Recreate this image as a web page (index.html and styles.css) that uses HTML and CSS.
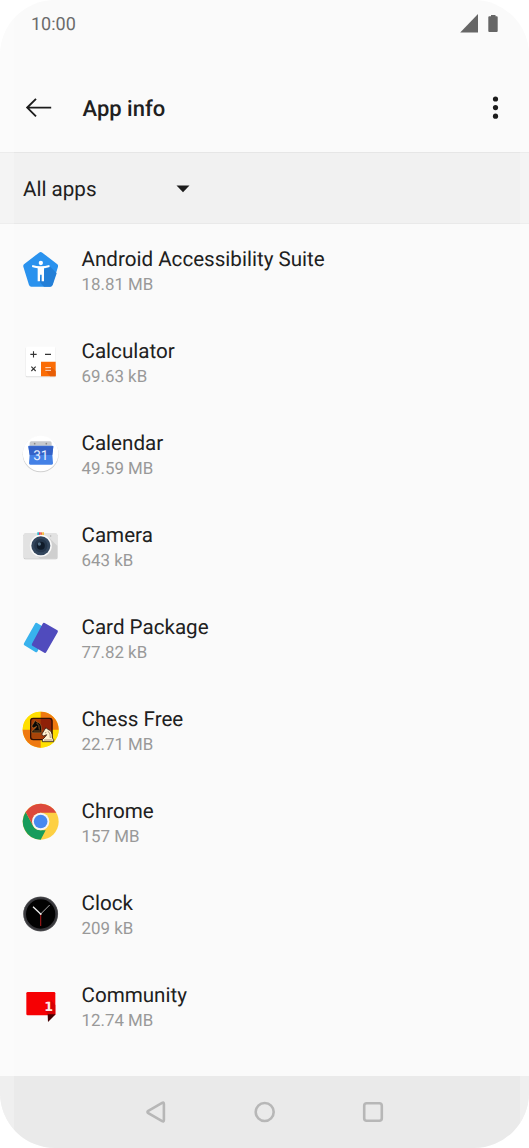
FILE: index.html
```html
<!DOCTYPE html>
<html lang="en">
<head>
<meta charset="utf-8">
<title>App info</title>
<link rel="stylesheet" href="styles.css">
</head>
<body>
<div class="phone">
  <div class="statusbar">
    <span class="time">10:00</span>
    <svg class="status-icons" width="40" height="20" viewBox="0 0 40 20"><path d="M1.200 19.500 19 1v18.500z"/><path d="M32 2h4.500v1.200h1.200q1 0 1 1V18q0 1-1 1h-7.400q-1 0-1-1V4.200q0-1 1-1H32z"/></svg>
  </div>
  <header class="appbar">
    <svg class="back" width="28" height="24" viewBox="0 0 28 24"><path d="M26.200 11.600H2.200M11 2.800 2.200 11.600l8.800 8.800"/></svg>
    <h1>App info</h1>
    <svg class="more" width="8" height="24" viewBox="0 0 8 24"><circle cx="4.500" cy="3" r="2.600"/><circle cx="4.500" cy="11.600" r="2.600"/><circle cx="4.500" cy="20.200" r="2.600"/></svg>
  </header>
  <div class="filter"><span>All apps</span><svg width="14" height="8" viewBox="0 0 14 8"><path d="M.5.5h13L7 7.200z"/></svg></div>
  <ul class="apps">
    <li>
      <svg class="icon" viewBox="0 0 180 180"><path d="M97 38 142 73q3 3 2 7l-17 55q-2 5-7 5H64q-5 0-7-5L40 80q-1-4 2-7L87 38q5-4 10 0z" fill="#2a92ee"/><path d="m118 77 22 23-12 35q-2 5-8 5h-18l-16-18 16-32z" fill="#237fd7"/><circle cx="92.500" cy="69" r="6.500" fill="#fff"/><path d="M67 75q25 8 51 0l1 6q-9 3-17 4v39h-7v-20h-5v20h-7V85q-9-1-17-4z" fill="#fff"/></svg>
      <div><h2>Android Accessibility Suite</h2><p>18.81 MB</p></div>
    </li>
    <li>
      <svg class="icon" viewBox="0 0 180 180"><rect x="47" y="46" width="91" height="90" rx="4" fill="#dedede"/><rect x="48" y="44" width="89" height="89" rx="3" fill="#fff"/><path d="M93 89h44v41q0 3-3 3H93z" fill="#fb6c05"/><path d="m123 104 14 14v15h-17l-14-18z" fill="#e75d05"/><path d="M61 67h19M70.500 57.500v19M105 67h18M64 104l13 13M77 104l-13 13" stroke="#333" stroke-width="3.300" fill="none"/><path d="M106 107h17M106 115h17" stroke="#ffe3ce" stroke-width="3"/></svg>
      <div><h2>Calculator</h2><p>69.63 kB</p></div>
    </li>
    <li>
      <svg class="icon" viewBox="0 0 180 180"><circle cx="92" cy="91" r="54" fill="#d0d0d0"/><circle cx="92" cy="88.500" r="53.500" fill="#fff"/><path d="M64 52h56q5 0 5 5v10H59V57q0-5 5-5z" fill="#c7c9cd"/><circle cx="74" cy="59" r="2.500" fill="#888"/><circle cx="109" cy="59" r="2.500" fill="#888"/><path d="M57 65h71q2 0 2 3l-3 24 2 26q0 4-4 4H61q-4 0-4-4l2-26-4-24q0-3 2-3z" fill="#4481e6"/><path d="M55 67h75l-3 26H59z" fill="#3462c8"/><text x="92.500" y="108" text-anchor="middle" class="date">31</text></svg>
      <div><h2>Calendar</h2><p>49.59 MB</p></div>
    </li>
    <li>
      <svg class="icon" viewBox="0 0 180 180"><rect x="41" y="53" width="101" height="77" rx="5" fill="#bfbfbf"/><rect x="41" y="51" width="101" height="77" rx="5" fill="#e2e2e2"/><path d="m117 65 25 24v39H91l-20-15z" fill="#cfcfcf"/><path d="M82 49h5v9h-5z" fill="#25b8d0"/><path d="M87 49h5v9h-5z" fill="#e83269"/><path d="M92 49h5v9h-5z" fill="#f36b32"/><path d="M97 49h5v9h-5z" fill="#f6c13c"/><circle cx="92.500" cy="89" r="33" fill="#fafafa"/><circle cx="92.500" cy="89" r="28.500" fill="#33465d"/><circle cx="92.500" cy="89" r="20" fill="#25364b"/><circle cx="92.500" cy="89" r="12" fill="#101b2a"/><circle cx="88" cy="84" r="5" fill="#547087"/><circle cx="122" cy="60" r="2" fill="#aaa"/></svg>
      <div><h2>Camera</h2><p>643 kB</p></div>
    </li>
    <li>
      <svg class="icon" viewBox="0 0 180 180"><path d="m81 45 33 20-32 66q-2 3-6 1l-33-20q-3-2-1-6l33-59q2-4 6-2z" fill="#38b2ed"/><path d="m104 45 38 22q3 2 1 6l-34 59q-2 4-6 2l-36-21q-3-2-1-6l32-60q2-4 6-2z" fill="#504bbd"/></svg>
      <div><h2>Card Package</h2><p>77.82 kB</p></div>
    </li>
    <li>
      <svg class="icon" viewBox="0 0 180 180"><circle cx="92" cy="89" r="54" fill="#ffdf00"/><path d="M92 35a54 54 0 0 0-54 54h54zM92 143a54 54 0 0 0 54-54H92z" fill="#ffdf00"/><path d="M92 35a54 54 0 0 1 54 54H92zM92 143a54 54 0 0 1-54-54h54z" fill="#ef7910"/><rect x="61" y="54" width="66" height="66" rx="8" fill="#a83c08"/><path d="M92 54h27q8 0 8 8v27H92z" fill="#8f2108"/><path d="M61 89h31v31H69q-8 0-8-8z" fill="#a84408"/><rect x="62" y="55" width="64" height="64" rx="8" stroke="#311004" stroke-width="4" fill="none"/><path d="m75 61 5 5q15 2 15 24v8H66v-5l10-8 4-6-9 5-6-5 8-13z" fill="#090706" stroke="#c38738" stroke-width="1.500"/><path d="M80 69q9 5 8 20M70 93h22" stroke="#b87932" stroke-width="2" fill="none"/><path d="m108 83 5 5q15 3 14 26l4 4v7H97v-6l9-9 4-6-9 4-6-5 8-13z" fill="#fff2d2" stroke="#2d1a0e" stroke-width="2.500"/><path d="M114 94q8 5 7 20M105 99l4-2M102 120h26" stroke="#806044" stroke-width="2" fill="none"/></svg>
      <div><h2>Chess Free</h2><p>22.71 MB</p></div>
    </li>
    <li>
      <svg class="icon" viewBox="0 0 180 180"><circle cx="92" cy="89" r="54" fill="#fdd043"/><path d="M47 60 69.500 102Q77 116 93 115h14l-15 28A54 54 0 0 1 47 60z" fill="#179c5b"/><path d="m47 60 23 42q-7-22 5-33 8-7 17-7h47a54 54 0 0 0-92-2z" fill="#dc493c"/><circle cx="92" cy="88.500" r="26" fill="#f5f5f5"/><circle cx="92" cy="88.500" r="20.500" fill="#4689ef"/></svg>
      <div><h2>Chrome</h2><p>157 MB</p></div>
    </li>
    <li>
      <svg class="icon" viewBox="0 0 180 180"><circle cx="92" cy="90" r="52" fill="#37373b"/><circle cx="92" cy="90" r="51" fill="none" stroke="#606063" stroke-width="1.500"/><circle cx="92" cy="90" r="44" fill="#020202"/><path d="m69 68 23 22" stroke="#eee" stroke-width="4"/><path d="m92 90 27-27" stroke="#aaa" stroke-width="3"/><path d="M92 91v35" stroke="#9b1717" stroke-width="3.500"/><circle cx="92" cy="90" r="3" fill="#eee"/></svg>
      <div><h2>Clock</h2><p>209 kB</p></div>
    </li>
    <li>
      <svg class="icon" viewBox="0 0 180 180"><path d="M53 48h79q4 0 4 4v62q0 4-4 4H53q-4 0-4-4V52q0-4 4-4z" fill="#f60003"/><path d="m123 72 13 15v27q0 4-4 4h-16l-10-14z" fill="#d70004"/><path d="M113 115h24l-23 23z" fill="#470003"/><text x="116" y="104" text-anchor="middle" class="badge">1</text></svg>
      <div><h2>Community</h2><p>12.74 MB</p></div>
    </li>
  </ul>
  <nav>
    <svg width="24" height="24" viewBox="0 0 24 24"><path d="M4.300 10.800 18.100 2.900q1.800-.8 1.800 1v16.200q0 1.800-1.800 1L4.300 13.200q-1.700-1.200 0-2.400z"/></svg>
    <svg width="24" height="24" viewBox="0 0 24 24"><circle cx="11.700" cy="12" r="9"/></svg>
    <svg width="24" height="24" viewBox="0 0 24 24"><rect x="3.200" y="3.200" width="17.600" height="17.600" rx="2.500"/></svg>
  </nav>
</div>
</body>
</html>
```

FILE: styles.css
```css
* { box-sizing: border-box; }
body { margin: 0; background: #fff; font-family: Roboto, sans-serif; color: #202020; text-rendering: geometricPrecision; }
h1, h2, p, ul { margin: 0; padding: 0; }
svg { display: block; flex: none; }
.phone { position: relative; width: 529px; height: 1148px; overflow: hidden; border-radius: 55px; background: #fafafa; display: flex; flex-direction: column; }
.phone::before, .phone::after { content: ""; position: absolute; top: 0; bottom: 0; left: 0; width: 14px; background: rgba(255, 255, 255, .25); }
.phone::after { left: auto; right: 0; width: 9px; }
.statusbar { height: 64px; padding: 13px 30px 0 31px; display: flex; justify-content: space-between; align-items: flex-start; }
.time { font-size: 18px; line-height: 23px; color: #6b6b6b; }
.status-icons { fill: #666; }
.appbar { height: 88px; padding: 0 30px 0 25px; display: flex; align-items: center; }
.back { fill: none; stroke: #1c1c1c; stroke-width: 1.900; }
h1 { flex: 1; margin-left: 29.500px; padding-top: 4px; font-size: 22px; font-weight: 500; line-height: 30px; }
.more { fill: #1c1c1c; }
.filter { height: 72px; padding: 2px 24px 0 23px; border-top: 1px solid #e6e6e6; border-bottom: 1px solid #e9e9e9; background: #f1f1f1; display: flex; align-items: center; font-size: 20.600px; }
.filter span { width: 153px; padding-top: 2px; }
.filter svg { fill: #1c1c1c; }
.apps { list-style: none; flex: 1; }
.apps li { height: 92px; padding-left: 10px; display: flex; align-items: center; gap: 11.500px; }
.apps li > div { padding-top: 5px; }
.icon { width: 60px; height: 60px; }
h2 { font-size: 20.600px; font-weight: 400; line-height: 26px; }
.apps p { font-size: 16.900px; line-height: 25px; color: #999; }
.date { font: 41px Roboto, sans-serif; fill: #e8f0ff; }
.badge { font: bold 38px "DejaVu Sans", sans-serif; fill: #ffe8e8; }
nav { height: 72px; background: #eaeaea; display: flex; justify-content: center; align-items: center; gap: 84.500px; }
nav svg { fill: none; stroke: #b7b7b7; stroke-width: 2.600; }
```
